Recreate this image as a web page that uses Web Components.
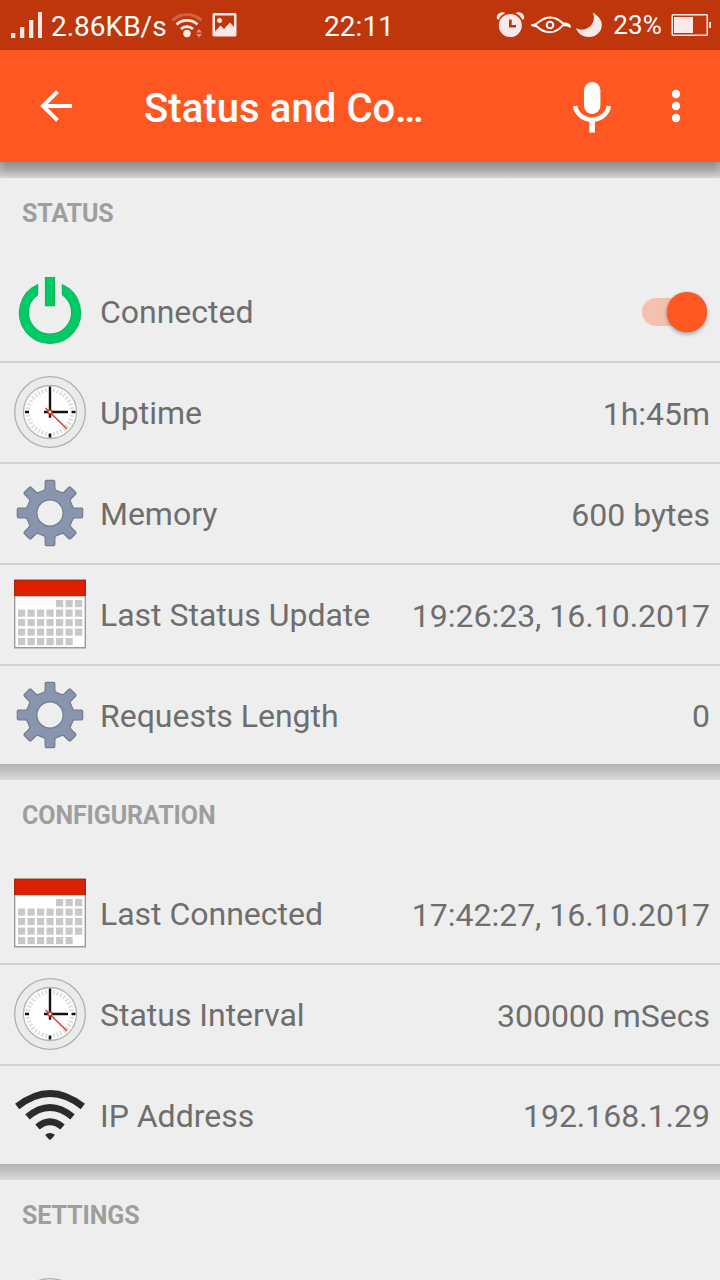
<!DOCTYPE html>
<html lang="en">
<head>
<meta charset="utf-8">
<title>Status and Configuration</title>
<style>
html,body{margin:0;height:1280px;overflow:hidden;background:#eee;font-family:Roboto,"Noto Sans",sans-serif}
</style>
</head>
<body>
<device-screen>
  <status-bar></status-bar>
  <tool-bar>Status and Co…</tool-bar>
  <section-gap strong></section-gap>
  <list-section heading="STATUS">
    <list-row icon="power" label="Connected"><toggle-switch></toggle-switch></list-row>
    <list-row icon="clock" label="Uptime">1h:45m</list-row>
    <list-row icon="gear" label="Memory">600 bytes</list-row>
    <list-row icon="calendar" label="Last Status Update">19:26:23, 16.10.2017</list-row>
    <list-row icon="gear" label="Requests Length" last>0</list-row>
  </list-section>
  <section-gap></section-gap>
  <list-section heading="CONFIGURATION">
    <list-row icon="calendar" label="Last Connected">17:42:27, 16.10.2017</list-row>
    <list-row icon="clock" label="Status Interval">300000 mSecs</list-row>
    <list-row icon="wifi" label="IP Address" last>192.168.1.29</list-row>
  </list-section>
  <section-gap></section-gap>
  <list-section heading="SETTINGS">
    <list-row icon="clock" label="" style="margin-top:1px"></list-row>
  </list-section>
</device-screen>
<script>
const define = (name, html) => customElements.define(name, class extends HTMLElement {
  constructor() {
    super();
    this.attachShadow({ mode: 'open' }).innerHTML = html;
  }
});

define('device-screen', `<style>:host{display:flex;flex-direction:column;width:720px;height:1280px;overflow:hidden;background:#eee}</style><slot></slot>`);

define('status-bar', `<style>
:host{display:grid;grid-template-columns:1fr auto 1fr;align-items:center;height:50px;flex:none;background:#bf360c;color:#fff;font-size:28px}
.l,.r{display:flex;align-items:center;height:50px}
.r{justify-content:flex-end}
svg{display:block;flex:none;fill:#fbe9e7}
.speed{margin-left:9px;width:117px;padding-top:3px;white-space:nowrap}
.time{padding-top:3px;letter-spacing:.1px;margin-right:2px}
.pct{font-size:26px;letter-spacing:.15px;margin:0 9px 0 11px}
</style>
<div class="l">
<svg width="42" height="50"><path d="M11 33h4.300v5H11zM20 27h4.300v11H20zM29 20h4.300v18H29zM38 12h4v26h-4z"/></svg>
<span class="speed">2.86KB/s</span>
<svg width="72" height="50" viewBox="168 0 72 50"><g fill="none" stroke="#fbe9e7"><path d="M172.500 20.500a20.500 20.500 0 0 1 29 0" stroke-width="3" opacity=".25"/><path d="M176.500 24.500a15.500 15.500 0 0 1 21 0M181 29a9 9 0 0 1 12 0" stroke-width="2.800"/></g><circle cx="187" cy="33.500" r="3.700"/><path d="M199 29l3 3.500h-6zM199 37.500l3-3.500h-6z" opacity=".5"/><path fill-rule="evenodd" d="M214 13h21q1.500 0 1.500 1.500v20.500q0 1.500-1.500 1.500h-21q-1.500 0-1.500-1.500v-20.500q0-1.500 1.500-1.500zM215 15.500v16l5.500-6 3.500 3.500 6-6.500 4 4.500V15.500zM219.500 18a2.500 2.500 0 1 1 0 5a2.500 2.500 0 0 1 0-5z"/></svg>
</div>
<div class="time">22:11</div>
<div class="r">
<svg width="106" height="50" viewBox="496 0 106 50"><path fill-rule="evenodd" d="M510.300 14a11.500 11.500 0 1 1 0 23a11.500 11.500 0 0 1 0-23zM509 19.500v8h7v-2.500h-4.300v-5.500z"/><path d="M496.800 18.500C496 14 501 10.500 505.500 13A14 14 0 0 0 498.500 20zM524.200 18.500C525 14 520 10.500 515.500 13A14 14 0 0 1 522.500 20z"/><g fill="none" stroke="#fff" stroke-linecap="round" stroke-linejoin="round"><path d="M532 25C536 25 536 24 538 22.500C546 16 555 15.500 563 23.500C567 23 569 24 570 26.500C567 25 565 25 563 25C556 34 545 34.500 537 26.500C536 26 533 26 532 25z" stroke-width="2"/><circle cx="550" cy="25" r="3.300" stroke-width="2"/></g><path d="M592.500 12.500C597 15 601.800 19 601.800 25A12.800 12.200 0 0 1 589 37C583 37 578 34 576 28C582 31.500 589 29 592 24C594.500 20 594.500 15.500 592.500 12.500z"/></svg>
<span class="pct">23%</span>
<svg width="49" height="50" viewBox="671 0 49 50"><path fill-rule="evenodd" d="M673 14h33.500q1.500 0 1.500 1.500v19q0 1.500-1.500 1.500H673q-1.500 0-1.500-1.500v-19q0-1.500 1.500-1.500zM673 15.500v19h33.500v-19z"/><path d="M674 17h19v16h-19zM709 22h2v6h-2z"/></svg>
</div>`);

define('tool-bar', `<style>
:host{display:flex;align-items:center;height:112px;flex:none;background:#ff5722;color:#fff}
h1{margin:6px 0 0 0;width:428px;font-weight:500;font-size:40px;line-height:48px;letter-spacing:.08px;white-space:nowrap}
svg{display:block;flex:none}
</style>
<svg width="144" height="112" viewBox="0 50 144 112"><path d="M57.500 91.700L43 106l14.500 14.300M43 106h29" fill="none" stroke="#fff" stroke-width="4"/></svg>
<h1><slot></slot></h1>
<svg width="148" height="112" viewBox="572 50 148 112"><rect x="584" y="82" width="16.400" height="32" rx="8.200" fill="#fff"/><path d="M575.200 106a16.900 15.500 0 0 0 33.600 0" fill="none" stroke="#fff" stroke-width="4.500"/><path d="M589.300 121h5.600v11.600h-5.600z" fill="#fff"/><g fill="#fff"><circle cx="676" cy="94" r="4.200"/><circle cx="676" cy="106" r="4.200"/><circle cx="676" cy="118" r="4.200"/></g></svg>`);

define('section-gap', `<style>
:host{display:block;height:16px;flex:none;background:linear-gradient(#b2b2b0,#d9d9d8)}
:host([strong]){background:linear-gradient(90deg,rgba(215,215,213,.25),transparent 7px,transparent 713px,rgba(215,215,213,.25)),linear-gradient(#8f8f8d,#aaaaa8 50%,#d5d5d3)}
</style>`);

define('toggle-switch', `<style>
:host{display:grid;align-items:center;width:65px;height:42px;margin:0 3px 2px 0}
.t,.k{grid-area:1/1}
.t{width:54px;height:28px;border-radius:14px;background:#f4c0b0}
.k{width:40px;height:40px;border-radius:50%;background:#ff5722;justify-self:end;box-shadow:0 2px 4px rgba(0,0,0,.35),0 0 1px rgba(0,0,0,.3)}
</style><div class="t"></div><div class="k"></div>`);

const ticks = Array.from({ length: 36 }, (_, i) => i).filter(i => i % 9 !== 0)
  .map(i => `<path d="M36 11.800v4.400" stroke="#dedede" stroke-width="1.900" transform="rotate(${i * 10} 36 36)"/>`).join('');

const cells = [];
for (let r = 0; r < 5; r++) for (let c = 0; c < 7; c++)
  if (!(r === 0 && c < 4) && !(r === 4 && c === 6))
    cells.push(`<rect x="${4 + c * 9.5}" y="${22 + r * 9.5}" width="7.2" height="7.2"/>`);

const tooth = Array.from({ length: 8 }, (_, i) => {
  const at = (radius, deg) => {
    const a = (deg + i * 45 - 90) * Math.PI / 180;
    return (36 + radius * Math.cos(a)).toFixed(2) + ' ' + (36 + radius * Math.sin(a)).toFixed(2);
  };
  return `${i ? 'L' : 'M'}${at(23.8, -12.5)}L${at(26, -10.8)}L${at(32, -8.6)}Q${at(32.9, -8)} ${at(32.9, -6.5)}L${at(32.9, 6.5)}Q${at(32.9, 8)} ${at(32, 8.6)}L${at(26, 10.8)}L${at(23.8, 12.5)}Q${at(23.2, 22.5)} ${at(23.8, 32.5)}`;
}).join('') + 'Z';

const icons = {
  power: `<g fill="#00cb66" stroke="#0fb75f" stroke-width="1.200" transform="translate(0 2.500)"><path d="M23.600 7.300A30.600 30.600 0 1 0 48.400 7.300V17.300A21.600 21.600 0 1 1 23.600 17.300Z"/><path d="M31.500 0h9v28.200h-9z"/></g>`,
  clock: `<circle cx="36" cy="36" r="35.300" fill="#ebebeb" stroke="#b0b0b0" stroke-width="1.300"/><circle cx="36" cy="36" r="26.500" fill="#fff" stroke="#b5b5b5" stroke-width="1.300"/>${ticks}<path d="M36 10.500v31.300M30 36h24" stroke="#111" stroke-width="2.400"/><path d="M36 57.500v4M11 36h4M57.500 36h4" stroke="#111" stroke-width="2.600"/><path d="M31.500 32L53 53" stroke="#e03a2c" stroke-width="1.500"/><circle cx="36" cy="36" r="2" fill="#fff" stroke="#d7301f" stroke-width="1.300"/>`,
  gear: `<path d="${tooth}M36 22.900a13.100 13.100 0 1 0 0 26.200a13.100 13.100 0 0 0 0-26.200z" fill="#8994ae" fill-rule="evenodd" stroke="#747c8d" stroke-width="1.200" stroke-linejoin="round"/>`,
  calendar: `<path d="M.700 2.200h70.600v67.600H.700z" fill="#fff" stroke="#9b9b9b" stroke-width="1.400"/><path d="M.700 2.200h70.600v15.600H.700z" fill="#dc2000" stroke="#a81c06" stroke-width="1.100"/><g fill="#c8c8c8">${cells.join('')}</g>`,
  wifi: `<g transform="translate(0 -3)"><g fill="none" stroke="#2b2b2b" stroke-width="6.800"><path d="M3.200 30.500Q36 4.500 68.800 30.500"/><path d="M13.500 40.800Q36 22 58.500 40.800"/><path d="M23.500 51Q36 40.500 48.500 51"/></g><path d="M31.300 58.500Q36 55.400 40.700 58.500Q40 60.800 36 64Q32 60.800 31.300 58.500z" fill="#2b2b2b"/></g>`
};

customElements.define('list-row', class extends HTMLElement {
  constructor() {
    super();
    const name = this.getAttribute('icon');
    this.attachShadow({ mode: 'open' }).innerHTML = `<style>
:host{display:flex;align-items:center;box-sizing:border-box;height:101px;flex:none;border-bottom:2px solid #d0d0d0;padding:0 10px 0 14px;font-size:32px;color:#6e6e6e;white-space:nowrap}
:host([last]){height:98px;border-bottom:0}
svg{display:block;flex:none;overflow:visible;margin-bottom:1px}
:host([last]) svg{margin-bottom:0}
.label{flex:1;margin-left:14px;letter-spacing:-.02px}
:host([last]) .label{padding-top:2px}
.value{padding-top:2px;letter-spacing:-.01px}
</style><svg width="72" height="72" viewBox="0 0 72 72">${icons[name]}</svg><span class="label">${this.getAttribute('label')}</span><div class="value"><slot></slot></div>`;
  }
});

customElements.define('list-section', class extends HTMLElement {
  constructor() {
    super();
    this.attachShadow({ mode: 'open' }).innerHTML = `<style>
:host{display:flex;flex-direction:column;flex:none;background:#eee}
h2{margin:0;height:84px;box-sizing:border-box;padding:20px 22px 0;font-size:25px;line-height:32px;font-weight:700;letter-spacing:-.1px;color:#9e9e9e}
</style><h2>${this.getAttribute('heading')}</h2><slot></slot>`;
  }
});
</script>
</body>
</html>
